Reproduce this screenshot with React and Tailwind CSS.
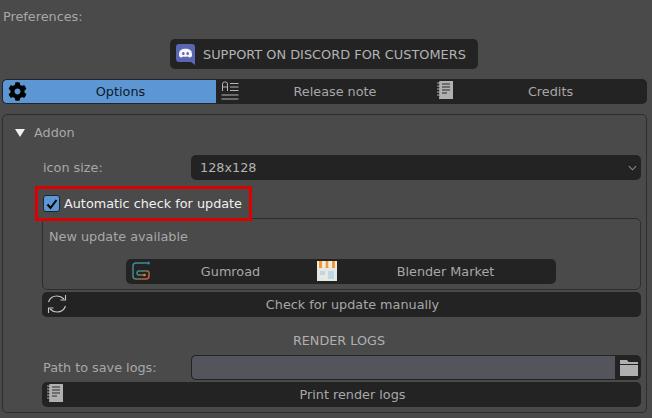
import { FaCog } from 'react-icons/fa';

const font = 'font-["DejaVu_Sans",sans-serif]';

function DiscordIcon() {
  return (
    <svg viewBox="0 0 19 21" className="w-[19px] h-[21px] ml-[6px] mt-px">
      <path d="M3 0h13a3 3 0 0 1 3 3v18l-4-3H3a3 3 0 0 1-3-3V3a3 3 0 0 1 3-3z" fill="#5a66b4" />
      <path d="M6.200 5.200c2-.6 4.600-.6 6.600 0 1.300.6 2.300 1.300 2.600 2 .6 1.700.8 3.400.6 5-1 .8-2 1.200-3 1.400l-.8-1.200c-1.800.5-3.600.5-5.400 0l-.8 1.200c-1-.2-2-.6-3-1.400-.2-1.600 0-3.300.6-5 .3-.7 1.300-1.400 2.600-2z" fill="#f4f4fa" />
      <ellipse cx="7.300" cy="9.600" rx="1.300" ry="1.500" fill="#5a66b4" />
      <ellipse cx="11.700" cy="9.600" rx="1.300" ry="1.500" fill="#5a66b4" />
    </svg>
  );
}

function NotebookIcon({ className }) {
  return (
    <svg viewBox="0 0 16 18" className={className}>
      <path d="M2 0h14v18H2z" fill="#b0b0b0" />
      <path d="M5 3h8M5 6h8M5 9h8M5 12h5" stroke="#2a2a2a" strokeWidth="1" />
      <path d="M0 2h3M0 5h3M0 8h3M0 11h3M0 14h3" stroke="#b0b0b0" strokeWidth="1" />
      <path d="M2 0v18" stroke="#2a2a2a" strokeWidth="0.6" strokeDasharray="1.5 1.5" />
    </svg>
  );
}

function RefreshIcon() {
  return (
    <svg viewBox="0 0 20 20" className="w-5 h-5" fill="none" stroke="#c8c8c8" strokeWidth="1.1">
      <path d="M1.5 8C3 3.5 6.5 2 10 2c3 0 5 1 7 3" />
      <path d="M18.5 1v5h-5" />
      <path d="M18.5 12C17 16.5 13.5 18 10 18c-3 0-5-1-7-3" />
      <path d="M1.5 19v-5h5" />
    </svg>
  );
}

function ReleaseNoteIcon() {
  return (
    <svg viewBox="0 0 18 20" className="w-[18px] h-5" fill="none" stroke="#b4b4b4" strokeWidth="1">
      <path d="M1.5 10V3a2 2 0 0 1 2-2h1a2 2 0 0 1 2 2v7M1.5 6h5" />
      <path d="M9 2.5h8.5M9 6h8.5M9 9.500h8.500M0.500 14h17M0.500 18h17" />
    </svg>
  );
}

function GumroadIcon() {
  return (
    <svg viewBox="0 0 20 20" className="w-5 h-5" fill="none" strokeWidth="1.5" strokeLinecap="round">
      <path d="M17 2H5a3 3 0 0 0-3 3v10a3 3 0 0 0 3 3h10a3 3 0 0 0 3-3v-3a2 2 0 0 0-2-2H8a2 2 0 0 0-2 2 2 2 0 0 0 2 2h5" stroke="url(#gum)" />
      <circle cx="17.500" cy="2" r="1.500" fill="#2f7f9f" />
      <circle cx="13.500" cy="14" r="1.300" fill="#c88a3a" />
      <defs>
        <linearGradient id="gum" gradientUnits="userSpaceOnUse" x1="2" y1="2" x2="18" y2="18">
          <stop offset="0" stopColor="#2f8fa8" />
          <stop offset="0.500" stopColor="#4a8a80" />
          <stop offset="1" stopColor="#e0562c" />
        </linearGradient>
      </defs>
    </svg>
  );
}

function MarketIcon() {
  return (
    <svg viewBox="0 0 20 20" className="w-5 h-5">
      <path d="M0 0h20v20H0z" fill="#e6e8e6" />
      <path d="M2 0h3v7H2zM8.500 0h3v7h-3zM15 0h3v7h-3z" fill="#ef9a3a" />
      <path d="M0 0h2v6H0zM5 0h3.500v6H5zM11.500 0H15v6h-3.500zM18 0h2v6h-2z" fill="#f6ead8" />
      <path d="M3 10h5v4H3z" fill="#c4d4d8" />
      <path d="M11 10h6v8h-6z" fill="#c0d8e4" />
    </svg>
  );
}

function WideButton({ icon, children }) {
  return (
    <div className="relative h-[25px] rounded-[5px] bg-[#232323] flex items-center justify-center pl-[22px] text-[#a8a8a8]">
      <span className="absolute left-[5px] top-[2px]">{icon}</span>
      {children}
    </div>
  );
}

export default function App() {
  return (
    <div className={`${font} w-[652px] h-[418px] overflow-hidden bg-[#4a4a4a] text-[12.8px] leading-[17px] text-[#a8a8a8] px-[2px] pt-[8px]`}>
      <div className="pl-px h-[17px]">Preferences:</div>

      <div className="flex pl-[168px] mt-[14px]">
        <div className="w-[308px] h-[30px] rounded-[5px] bg-[#232323] flex items-center">
          <DiscordIcon />
          <span className="ml-[8px] text-[12.9px] text-[#b4b4b4] whitespace-nowrap">SUPPORT ON DISCORD FOR CUSTOMERS</span>
        </div>
      </div>

      <div className="flex h-[25px] mt-[10px] w-[645px] rounded-[5px] bg-[#232323] overflow-hidden">
        <div className="relative w-[214px] flex items-center justify-center pl-[22px] bg-[#5c97d4] text-[#0d1a2a] border border-r-0 border-[#1c2530] rounded-l-[5px]">
          <FaCog className="absolute left-[5px] top-[2px] w-[19px] h-[19px] text-black" />
          Options
        </div>
        <div className="relative w-[216px] flex items-center justify-center pl-[22px]">
          <span className="absolute left-[5px] top-[2px]"><ReleaseNoteIcon /></span>
          Release note
        </div>
        <div className="relative flex-1 flex items-center justify-center pl-[22px]">
          <span className="absolute left-[5px] top-[2px]"><NotebookIcon className="w-4 h-[18px] block" /></span>
          Credits
        </div>
      </div>

      <div className="mt-[10px] w-[645px] h-[299px] border border-[#2e2e2e] rounded-[5px] pt-[9px]">
        <div className="flex items-center h-[17px] pl-[12px]">
          <svg viewBox="0 0 10 8" className="w-[10px] h-2"><path d="M0 0h10L5 8z" fill="#f0f0f0" /></svg>
          <span className="ml-[9px]">Addon</span>
        </div>

        <div className="ml-[39px] w-[599px] mt-[14px]">
          <div className="flex items-center h-[25px]">
            <span className="w-[149px] pl-px">icon size:</span>
            <div className="flex-1 h-[25px] rounded-[5px] bg-[#232323] flex items-center justify-between pl-[9px] pr-[4px] text-[#b4b4b4]">
              128x128
              <svg viewBox="0 0 10 6" className="w-[9px] h-[6px]" fill="none" stroke="#8c8c8c" strokeWidth="1.200"><path d="M1 1l4 4 4-4" /></svg>
            </div>
          </div>

          <div className="relative z-10 flex items-center h-[25px] mt-[11px] pl-px text-[#f0f0f0]">
            <div className="absolute left-[-7px] top-[-5px] w-[217px] h-[35px] border-[3px] border-[#dc0000]" />
            <span className="w-[17px] h-[17px] rounded-[3px] bg-[#5c97d4] border border-[#1c2530] flex items-center justify-center">
              <svg viewBox="0 0 12 12" className="w-3 h-3" fill="none" stroke="#000" strokeWidth="2"><path d="M1.500 6.500l3 3.500 6-8" /></svg>
            </span>
            <span className="ml-[4px]">Automatic check for update</span>
          </div>

          <div className="h-[72px] mt-[2px] border border-[#2e2e2e] rounded-[5px] pl-[6px] pt-[9px]">
            <div className="h-[17px]">New update available</div>
            <div className="flex h-[25px] w-[430px] mt-[14px] ml-[77px] rounded-[5px] bg-[#232323]">
              <div className="relative w-[186px] flex items-center justify-center pl-[23px]">
                <span className="absolute left-[5px] top-[2px]"><GumroadIcon /></span>
                Gumroad
              </div>
              <div className="relative flex-1 flex items-center justify-center pl-[23px]">
                <span className="absolute left-[5px] top-[2px]"><MarketIcon /></span>
                Blender Market
              </div>
            </div>
          </div>

          <div className="mt-[2px]">
            <WideButton icon={<RefreshIcon />}>Check for update manually</WideButton>
          </div>

          <div className="h-[17px] mt-[15px] text-center pr-[5px] text-[#b0b0b0]">RENDER LOGS</div>

          <div className="flex items-center h-[25px] mt-[6px]">
            <span className="w-[149px] pl-px">Path to save logs:</span>
            <div className="flex-1 h-[25px] rounded-[5px] bg-[#232323] flex overflow-hidden">
              <div className="flex-1 bg-[#54545c] border border-[#232323] rounded-l-[5px]" />
              <div className="w-[25px] flex items-center justify-center">
                <svg viewBox="0 0 18 16" className="w-[18px] h-4"><path d="M0 0h7l1.500 2H18v2H0zM0 5h18v11H0z" fill="#b0b0b0" /></svg>
              </div>
            </div>
          </div>

          <div className="mt-[2px]">
            <WideButton icon={<NotebookIcon className="w-4 h-[18px] block" />}>Print render logs</WideButton>
          </div>
        </div>
      </div>
    </div>
  );
}
